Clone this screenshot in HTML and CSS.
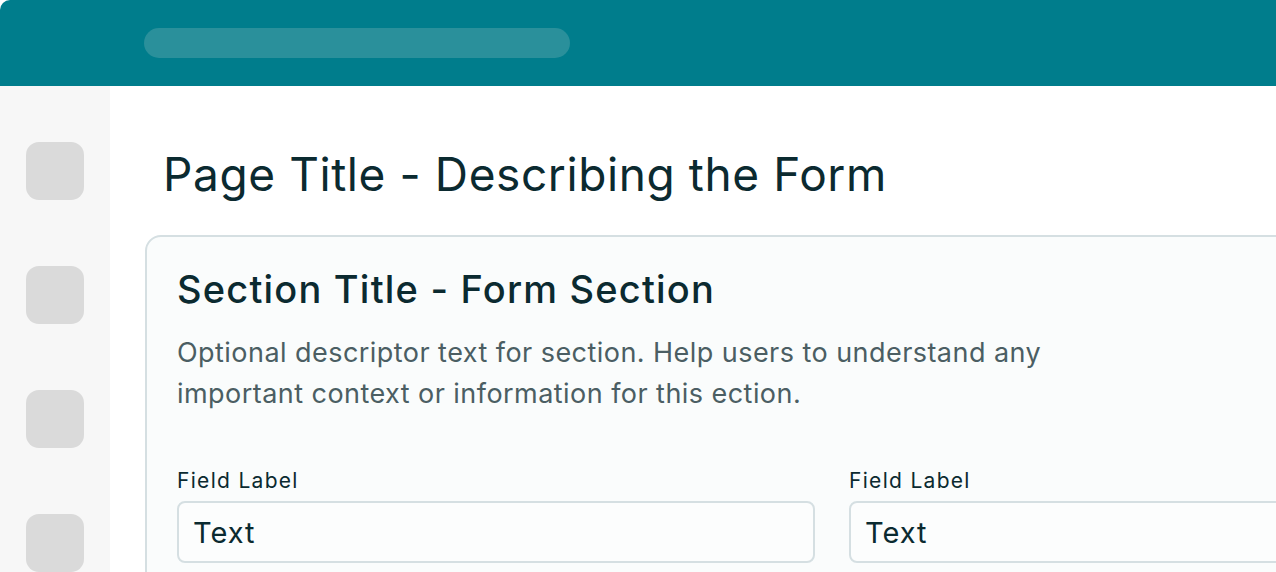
FILE: index.html
```html
<!DOCTYPE html>
<html>
<head>
<meta charset="utf-8">
<link rel="stylesheet" href="styles.css">
</head>
<body>
<div class="app">
  <header class="topbar">
    <div class="search"></div>
  </header>
  <div class="body">
    <nav class="sidebar">
      <div class="nav-item"></div>
      <div class="nav-item"></div>
      <div class="nav-item"></div>
      <div class="nav-item"></div>
    </nav>
    <main class="main">
      <h1 class="page-title">Page Title - Describing the Form</h1>
      <section class="card">
        <h2 class="section-title">Section Title - Form Section</h2>
        <p class="section-desc">Optional descriptor text for section. Help users to understand any<br>important context or information for this ection.</p>
        <div class="fields">
          <div class="field">
            <label class="field-label">Field Label</label>
            <div class="field-input">Text</div>
          </div>
          <div class="field">
            <label class="field-label">Field Label</label>
            <div class="field-input">Text</div>
          </div>
        </div>
      </section>
    </main>
  </div>
</div>
</body>
</html>
```

FILE: styles.css
```css
* { box-sizing: border-box; }
html, body {
  margin: 0;
  padding: 0;
  background: #ffffff;
  width: 1276px;
  height: 572px;
  overflow: hidden;
}
body {
  font-family: Inter, "Noto Sans", sans-serif;
  color: #0b2a30;
}
.app {
  width: 1276px;
  height: 572px;
  border-top-left-radius: 10px;
  overflow: hidden;
  display: flex;
  flex-direction: column;
}
.topbar {
  height: 86px;
  flex: 0 0 86px;
  background: #007d8c;
  padding: 28px 0 0 144px;
}
.search {
  width: 426px;
  height: 30px;
  border-radius: 15px;
  background: #2a909b;
}
.body {
  flex: 1;
  display: flex;
  min-height: 0;
}
.sidebar {
  width: 110px;
  flex: 0 0 110px;
  background: #f7f7f7;
  padding: 56px 0 0 26px;
  display: flex;
  flex-direction: column;
  gap: 66px;
}
.nav-item {
  width: 58px;
  height: 58px;
  flex: 0 0 58px;
  border-radius: 13px;
  background: #dadada;
}
.main {
  flex: 1;
  min-width: 0;
  padding: 61px 0 0 35px;
  overflow: hidden;
}
.page-title {
  margin: 0 0 34px 18px;
  font-size: 46px;
  line-height: 54px;
  letter-spacing: 0.6px;
  font-weight: 400;
  color: #0b2a30;
  white-space: nowrap;
}
.card {
  width: 1374px;
  border: 2px solid #d5dfe2;
  border-radius: 16px;
  background: #fafcfc;
  padding: 30px 30px 40px 30px;
}
.section-title {
  margin: 0 0 21px 0;
  font-size: 38px;
  line-height: 44px;
  letter-spacing: 1.2px;
  font-weight: 500;
  color: #0b2a30;
  white-space: nowrap;
}
.section-desc {
  margin: 0 0 55px 0;
  font-size: 27px;
  line-height: 41px;
  letter-spacing: 0.45px;
  color: #4b5e63;
  white-space: nowrap;
}
.fields {
  display: grid;
  grid-template-columns: 638px 638px;
  gap: 34px;
}
.field {
  display: flex;
  flex-direction: column;
  gap: 8px;
}
.field-label {
  font-size: 21px;
  line-height: 24px;
  letter-spacing: 1.3px;
  color: #0b2a30;
}
.field-input {
  height: 62px;
  border: 2px solid #d5dfe2;
  border-radius: 8px;
  background: #fcfdfd;
  padding: 0 14px;
  font-size: 29px;
  line-height: 59px;
  letter-spacing: 1px;
  color: #0b2a30;
}
```
